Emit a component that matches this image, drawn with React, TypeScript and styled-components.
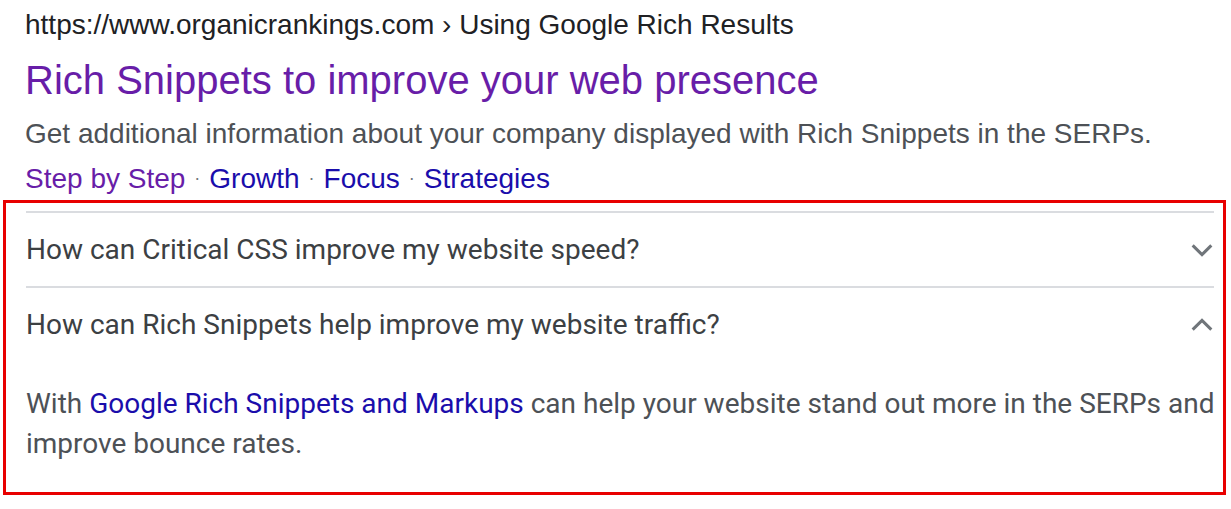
import React from "react";
import styled, { createGlobalStyle } from "styled-components";

const GlobalStyle = createGlobalStyle`
  body {
    margin: 0;
    background: #fff;
    font-family: "Liberation Sans", Arial, sans-serif;
  }
`;

const Result = styled.div`
  padding-top: 8px;
`;

const Head = styled.div`
  padding-left: 25px;
`;

const Url = styled.div`
  font-size: 28px;
  line-height: 34px;
  color: #202124;
`;

const Title = styled.a`
  display: block;
  margin-top: 15px;
  font-size: 40px;
  line-height: 46px;
  color: #681da8;
  text-decoration: none;
`;

const Description = styled.div`
  margin-top: 14px;
  font-size: 28px;
  line-height: 34px;
  color: #4d5156;
`;

const Sitelinks = styled.div`
  margin-top: 10px;
  font-size: 28px;
  line-height: 34px;
  color: #70757a;
`;

const Sitelink = styled.a<{ $visited?: boolean }>`
  color: ${(p) => (p.$visited ? "#681da8" : "#1a0dab")};
  text-decoration: none;
`;

const Dot = styled.span`
  margin: 0 9px;
  font-size: 18px;
  vertical-align: 4px;
`;

const Frame = styled.div`
  margin: 4px 0 0 3px;
  width: 1223px;
  height: 295px;
  box-sizing: border-box;
  border: 3px solid #e80000;
  padding: 8px 9px 0 20px;
  font-family: Roboto, "Liberation Sans", sans-serif;
`;

const Question = styled.div`
  display: flex;
  align-items: center;
  justify-content: space-between;
  height: 75px;
  box-sizing: border-box;
  border-top: 2px solid #dadce0;
  font-size: 28px;
  color: #3c4043;
`;

const Chevron = styled.svg`
  width: 28px;
  height: 28px;
  margin-right: -2px;
`;

const Answer = styled.div`
  padding-top: 23px;
  margin-right: -6px;
  font-size: 28px;
  line-height: 40px;
  color: #4d5156;
  a {
    color: #1a0dab;
    text-decoration: none;
  }
`;

function ChevronIcon({ up }: { up?: boolean }) {
  return (
    <Chevron viewBox="0 0 24 24">
      <path
        d={up ? "M4 16 L12 8 L20 16" : "M4 8 L12 16 L20 8"}
        fill="none"
        stroke="#70757a"
        strokeWidth="2.6"
      />
    </Chevron>
  );
}

export default function App() {
  return (
    <>
      <GlobalStyle />
      <Result>
        <Head>
          <Url>https://www.organicrankings.com › Using Google Rich Results</Url>
          <Title href="#">Rich Snippets to improve your web presence</Title>
          <Description>
            Get additional information about your company displayed with Rich
            Snippets in the SERPs.
          </Description>
          <Sitelinks>
            <Sitelink $visited href="#">Step by Step</Sitelink>
            <Dot>·</Dot>
            <Sitelink href="#">Growth</Sitelink>
            <Dot>·</Dot>
            <Sitelink href="#">Focus</Sitelink>
            <Dot>·</Dot>
            <Sitelink href="#">Strategies</Sitelink>
          </Sitelinks>
        </Head>
        <Frame>
          <Question>
            How can Critical CSS improve my website speed?
            <ChevronIcon />
          </Question>
          <Question>
            How can Rich Snippets help improve my website traffic?
            <ChevronIcon up />
          </Question>
          <Answer>
            With <a href="#">Google Rich Snippets and Markups</a> can help your
            website stand out more in the SERPs and improve bounce rates.
          </Answer>
        </Frame>
      </Result>
    </>
  );
}
